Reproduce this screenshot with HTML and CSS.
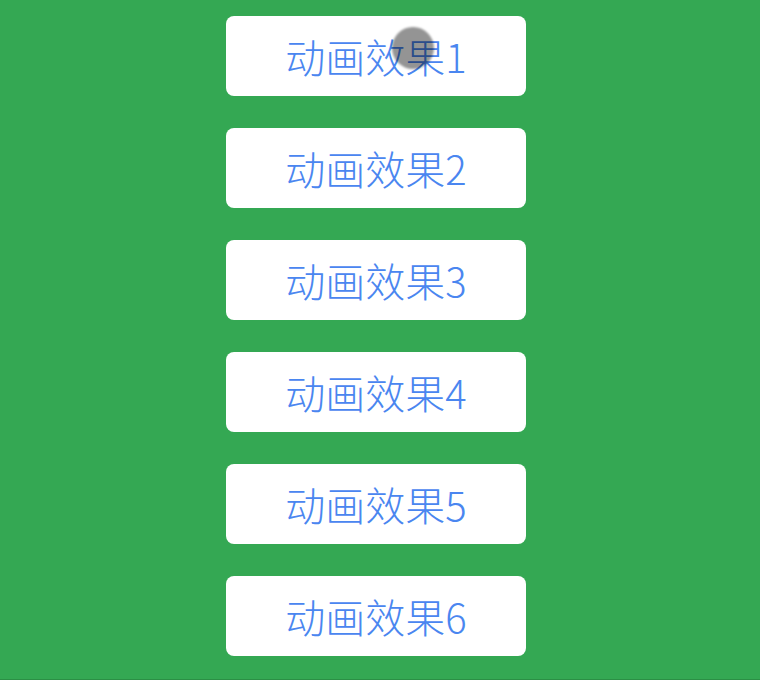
FILE: index.html
```html
<!DOCTYPE html>
<html lang="zh">
<head>
<meta charset="utf-8">
<title>动画效果</title>
<link rel="stylesheet" href="styles.css">
</head>
<body>
<main class="page">
  <button class="btn">动画效果1<span class="ripple"></span></button>
  <button class="btn">动画效果2</button>
  <button class="btn">动画效果3</button>
  <button class="btn">动画效果4</button>
  <button class="btn">动画效果5</button>
  <button class="btn">动画效果6</button>
</main>
</body>
</html>
```
FILE: styles.css
```css
html, body {
  margin: 0;
  padding: 0;
  background: #34a853;
}
.page {
  box-sizing: border-box;
  height: 680px;
  padding: 16px 0 0 226px;
  display: flex;
  flex-direction: column;
  align-items: flex-start;
  gap: 32px;
  border-bottom: 1px solid #2b8f45;
  overflow: hidden;
}
.btn {
  position: relative;
  width: 300px;
  height: 80px;
  border: none;
  border-radius: 8px;
  background: #ffffff;
  color: #4a86f0;
  font-family: "Noto Sans CJK SC", "Noto Sans", sans-serif;
  font-weight: 200;
  font-size: 40px;
  line-height: 80px;
  padding: 0;
  text-align: center;
  overflow: hidden;
}
.ripple {
  position: absolute;
  left: 166px;
  top: 11px;
  width: 42px;
  height: 42px;
  border-radius: 50%;
  background: rgba(0, 0, 0, 0.42);
  filter: blur(1.2px);
}
```
